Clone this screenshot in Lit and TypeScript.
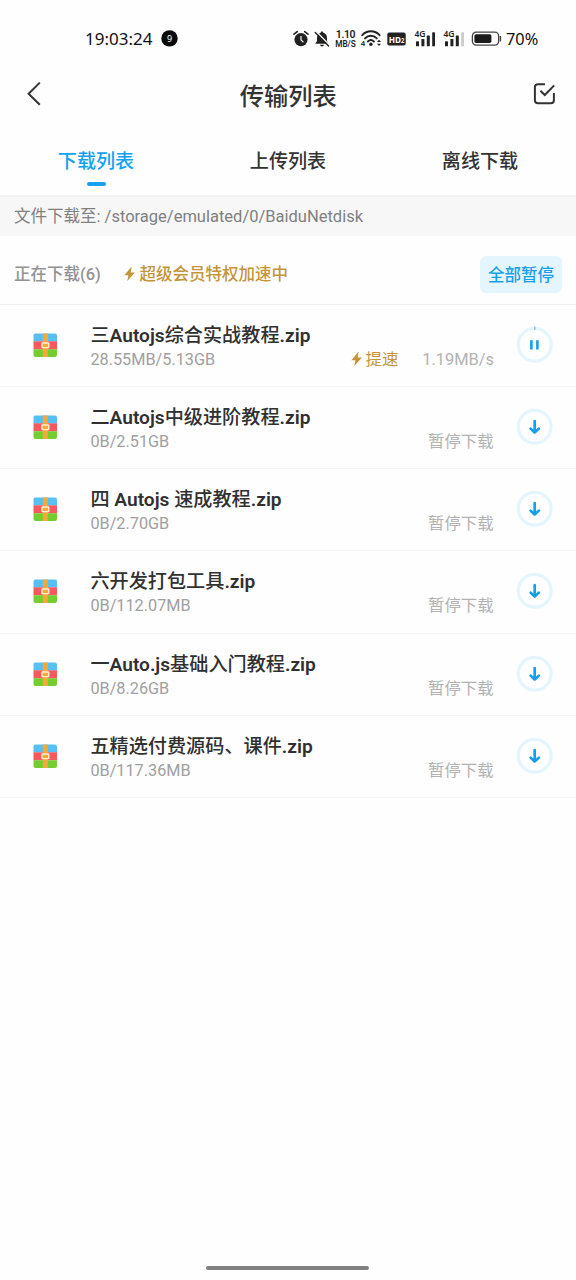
import { LitElement, html, css, svg } from "lit";
import { customElement, property } from "lit/decorators.js";

interface Task {
  name: string;
  size: string;
  active?: boolean;
}

const tasks: Task[] = [
  { name: "三Autojs综合实战教程.zip", size: "28.55MB/5.13GB", active: true },
  { name: "二Autojs中级进阶教程.zip", size: "0B/2.51GB" },
  { name: "四 Autojs 速成教程.zip", size: "0B/2.70GB" },
  { name: "六开发打包工具.zip", size: "0B/112.07MB" },
  { name: "一Auto.js基础入门教程.zip", size: "0B/8.26GB" },
  { name: "五精选付费源码、课件.zip", size: "0B/117.36MB" },
];

const bolt = html`<svg class="bolt" width="12" height="16" viewBox="0 0 12 16">
  <path d="M7.6 0.6 L0.4 9.2 H4.4 L3.2 15 L11 6.5 H6.8 Z" fill="#c4953a" />
</svg>`;

@customElement("status-bar")
export class StatusBar extends LitElement {
  static styles = css`
    :host {
      display: flex;
      align-items: center;
      height: 78px;
      box-sizing: border-box;
      padding: 0 37px 0 85px;
      color: #111;
      font-family: "Noto Sans", sans-serif;
    }
    .clock { font-size: 17px; line-height: 24px; width: 68px; white-space: nowrap; }
    .count { margin-left: 8px; }
    .icons { display: flex; align-items: center; margin-left: auto; }
    .alarm, .bell, .rate, .wifi, .sim { margin-right: 5px; }
    .hd { margin: 0 8px 0 -1px; }
    .battery { margin-right: 4px; }
    .percent { font-size: 16.3px; line-height: 24px; width: 33px; white-space: nowrap; }
    .rate { display: flex; flex-direction: column; align-items: center; width: 21px; font-family: Roboto, sans-serif; font-weight: 600; color: #222; white-space: nowrap; }
    .value { font-size: 10.5px; line-height: 10px; letter-spacing: -0.4px; }
    .unit { font-size: 8.2px; line-height: 8px; }
    svg { display: block; flex: none; overflow: visible; }
    text { font-family: "Noto Sans", sans-serif; }
  `;

  private sim(last: string) {
    return html`<svg class="sim" width="24" height="24" viewBox="0 -2 24 24" fill="#222">
      <text x="0.4" y="7.6" font-size="9.4" font-weight="600" textLength="11" lengthAdjust="spacingAndGlyphs">4G</text>
      <rect x="2" y="12.3" width="3" height="5" rx="0.6" />
      <rect x="7.4" y="10" width="3" height="7.3" rx="0.6" />
      <rect x="12.8" y="6.6" width="3" height="10.7" rx="0.6" />
      ${svg`<rect x="18.2" y="3.2" width="2.8" height="14.1" rx="0.6" fill=${last} />`}
    </svg>`;
  }

  render() {
    return html`
      <span class="clock">19:03:24</span>
      <svg class="count" width="17" height="18" viewBox="0 0 17 18">
        <circle cx="8.5" cy="8.4" r="8.2" fill="#0a0a0a" />
        <text x="8.5" y="11.8" font-size="9" fill="#fff" text-anchor="middle">9</text>
      </svg>
      <div class="icons">
        <svg class="alarm" width="16" height="18" viewBox="0 0 16 18">
          <circle cx="8" cy="9.6" r="6.6" fill="#222" />
          <path d="M1 4.2 L4.3 1.6 M15 4.2 L11.7 1.6" stroke="#222" stroke-width="1.6" stroke-linecap="round" />
          <path d="M8 6.4 V10 L10 11.8" fill="none" stroke="#fff" stroke-width="1.2" stroke-linecap="round" />
        </svg>
        <svg class="bell" width="16" height="18" viewBox="0 0 16 18">
          <path d="M8 1.5 C9 1.5 9.3 2.2 9.3 2.8 C12 3.6 13 5.6 13 8 V11 L14.8 13.7 H1.2 L3 11 V8 C3 5.6 4 3.6 6.7 2.8 C6.7 2.2 7 1.5 8 1.5 Z M6 14.8 H10 C9.8 16 9 16.5 8 16.5 C7 16.5 6.2 16 6 14.8 Z" fill="#222" />
          <path d="M2.4 1.8 L15.8 15.2" stroke="#fff" stroke-width="1.4" />
          <path d="M1.2 2.6 L14.6 16" stroke="#222" stroke-width="1.4" stroke-linecap="round" />
        </svg>
        <div class="rate"><span class="value">1.10</span><span class="unit">MB/S</span></div>
        <svg class="wifi" width="22" height="20" viewBox="0 0 22 20">
          <g fill="none" stroke="#222" stroke-width="1.9" stroke-linecap="round">
            <path d="M1.2 6.2 C6 1 13.8 1 18.6 6.2" />
            <path d="M4 9.4 C7.4 5.9 12.4 5.9 15.8 9.4" />
            <path d="M6.9 12.5 C8.7 10.8 11.1 10.8 12.9 12.5" />
          </g>
          <circle cx="9.9" cy="15.2" r="1.7" fill="#222" />
          <text x="-0.2" y="17" font-size="7.8" font-weight="600" fill="#222">4</text>
          <path d="M16 13 L18 10.8 L20 13 Z M16 14.8 L18 17 L20 14.8 Z" fill="#222" />
        </svg>
        <svg class="hd" width="19" height="20" viewBox="0 0 19 20">
          <rect x="0.3" y="3.6" width="18.4" height="13" rx="2" fill="#222" />
          <text x="1.8" y="13.6" font-size="9.6" font-weight="700" fill="#fff" textLength="15.6" lengthAdjust="spacingAndGlyphs">HD<tspan font-size="6.8">2</tspan></text>
        </svg>
        ${this.sim("#222")}${this.sim("#ccc")}
        <svg class="battery" width="30" height="16" viewBox="0 0 30 16">
          <rect x="0.4" y="1.1" width="26.2" height="13" rx="3.8" fill="none" stroke="#444" stroke-width="1.3" />
          <rect x="2.4" y="3.2" width="17" height="8.8" rx="1.8" fill="#1c1c1c" />
          <path d="M28.4 5.6 V9.8" stroke="#444" stroke-width="1.5" stroke-linecap="round" />
        </svg>
        <span class="percent">70%</span>
      </div>
    `;
  }
}

@customElement("download-row")
export class DownloadRow extends LitElement {
  @property({ attribute: false }) task!: Task;

  static styles = css`
    :host {
      display: flex;
      align-items: flex-start;
      box-sizing: border-box;
      height: 82.15px;
      padding: 0 23px 0 33px;
      border-bottom: 1px solid #f5f5f5;
    }
    svg { display: block; flex: none; }
    .archive { margin: 28px 32.4px 0 0; }
    .info { flex: 1; min-width: 0; padding-top: 18px; }
    .name { font-size: 19.15px; line-height: 26px; font-weight: 500; color: #303030; white-space: pre; }
    .latin { font-weight: 600; }
    .meta { display: flex; line-height: 22px; font-size: 16.4px; color: #a0a0a0; }
    .size { font-size: 16.25px; }
    .state { margin-left: auto; color: #b2b2b2; white-space: nowrap; }
    .paused { margin-right: 0.4px; }
    .boost { display: flex; align-items: center; gap: 3px; margin-left: auto; color: #c4953a; }
    .bolt { margin-top: -2px; }
    .boost + .state { margin-left: 24px; }
    .toggle { margin: 21px 0 0 22px; }
  `;

  render() {
    const { name, size, active } = this.task;
    const parts = name.split(/([ -~]+)/).filter(Boolean);
    return html`
      <svg class="archive" width="25" height="25" viewBox="0 0 25 25">
        <path d="M2 0.5 H22 Q24 0.5 24 2.5 V8.5 H0.5 V2.5 Q0.5 0.5 2 0.5 Z" fill="#56c0f5" />
        <rect x="0.5" y="8.3" width="23.5" height="8" fill="#f7595f" />
        <path d="M0.5 16.2 H24 V22 Q24 24 22 24 H2.5 Q0.5 24 0.5 22 Z" fill="#75ce30" />
        <rect x="9.8" y="0.5" width="5" height="23.5" fill="#f6a93b" />
        <rect x="9" y="10" width="6.8" height="4.6" rx="0.4" fill="#f6a93b" stroke="#fff0cf" stroke-width="1.4" />
      </svg>
      <div class="info">
        <div class="name">${parts.map((p) => (/^[ -~]/.test(p) ? html`<span class="latin">${p}</span>` : p))}</div>
        <div class="meta">
          <span class="size">${size}</span>
          ${active
            ? html`<span class="boost">${bolt}提速</span><span class="state">1.19MB/s</span>`
            : html`<span class="state paused">暂停下载</span>`}
        </div>
      </div>
      <svg class="toggle" width="37" height="37" viewBox="0 0 37 37">
        <circle cx="18.7" cy="18.8" r="16.4" fill="none" stroke="#e5f5fd" stroke-width="3.2" />
        ${active
          ? svg`<path d="M18.8 0.6 V4" stroke="#6bbfe8" stroke-width="1.2" />
              <path d="M15.4 14.2 V23.4 M21.4 14.2 V23.4" stroke="#169fe8" stroke-width="2.6" />`
          : svg`<path d="M18.7 13.2 V24.4 M14.6 20.6 L18.7 24.6 L22.8 20.6" fill="none" stroke="#169fe8" stroke-width="2.7" stroke-linecap="round" stroke-linejoin="round" />`}
      </svg>
    `;
  }
}

@customElement("app-root")
export class AppRoot extends LitElement {
  static styles = css`
    :host {
      display: flex;
      flex-direction: column;
      box-sizing: border-box;
      width: 100%;
      height: 1280px;
      background: #fefefe;
      color: #333;
      font-family: Roboto, "Noto Sans CJK SC", sans-serif;
      overflow: hidden;
    }
    svg { display: block; flex: none; }
    .nav { display: flex; justify-content: space-between; align-items: center; height: 34px; padding: 0 19px 0 26px; }
    .back { margin-top: -2px; }
    .title { font-size: 24.3px; line-height: 34px; font-weight: 500; padding: 3px 0.5px 0 0; }
    .tabs { display: grid; grid-template-columns: repeat(3, 1fr); height: 83px; box-sizing: border-box; padding-top: 36px; }
    .tab { display: flex; flex-direction: column; align-items: center; font-size: 19.1px; line-height: 28px; font-weight: 500; }
    .tab.on { color: #14a2f0; }
    .tab.on::after { content: ""; width: 19px; height: 4px; border-radius: 2px; margin-top: 6px; background: #14a2f0; }
    .path { box-sizing: border-box; height: 41px; padding: 10px 14px 0; background: #f7f7f7; border-top: 2px solid #f2f2f2; font-size: 16.5px; line-height: 20px; color: #808080; }
    .summary { display: flex; align-items: center; box-sizing: border-box; height: 69px; padding: 9px 14px 0; border-bottom: 1px solid #efefef; font-size: 16.5px; }
    .count { color: #929292; font-weight: 500; width: 88px; margin-right: 21.6px; line-height: 24px; }
    .vip { display: flex; align-items: center; gap: 4px; font-weight: 500; color: #c4953a; line-height: 24px; }
    .bolt { margin-top: -2px; }
    .pause { margin-left: auto; width: 82px; height: 37px; box-sizing: border-box; padding-top: 1px; border-radius: 6px; background: #e5f5fd; color: #169fe8; font-weight: 500; line-height: 37px; text-align: center; }
    .handle { width: 163px; height: 4px; margin: auto auto 10px 206.4px; border-radius: 2px; background: #808080; }
  `;

  render() {
    return html`
      <status-bar></status-bar>
      <div class="nav">
        <svg class="back" width="18" height="28" viewBox="0 0 18 28">
          <path d="M13.8 2.6 L2.6 13.7 L13.8 24.8" fill="none" stroke="#333" stroke-width="2" />
        </svg>
        <div class="title">传输列表</div>
        <svg width="24" height="26" viewBox="0 0 24 26">
          <path d="M12 2.2 H5 Q1.9 2.2 1.9 5.3 V18.2 Q1.9 21.3 5 21.3 H17.8 Q20.9 21.3 20.9 18.2 V11" fill="none" stroke="#333" stroke-width="2" />
          <path d="M7.4 8.7 L11.8 13 L21.2 3.4" fill="none" stroke="#333" stroke-width="2" />
        </svg>
      </div>
      <div class="tabs">
        <div class="tab on">下载列表</div>
        <div class="tab">上传列表</div>
        <div class="tab">离线下载</div>
      </div>
      <div class="path">文件下载至: /storage/emulated/0/BaiduNetdisk</div>
      <div class="summary">
        <span class="count">正在下载(6)</span>
        <span class="vip">${bolt}超级会员特权加速中</span>
        <span class="pause">全部暂停</span>
      </div>
      ${tasks.map((t) => html`<download-row .task=${t}></download-row>`)}
      <div class="handle"></div>
    `;
  }
}
